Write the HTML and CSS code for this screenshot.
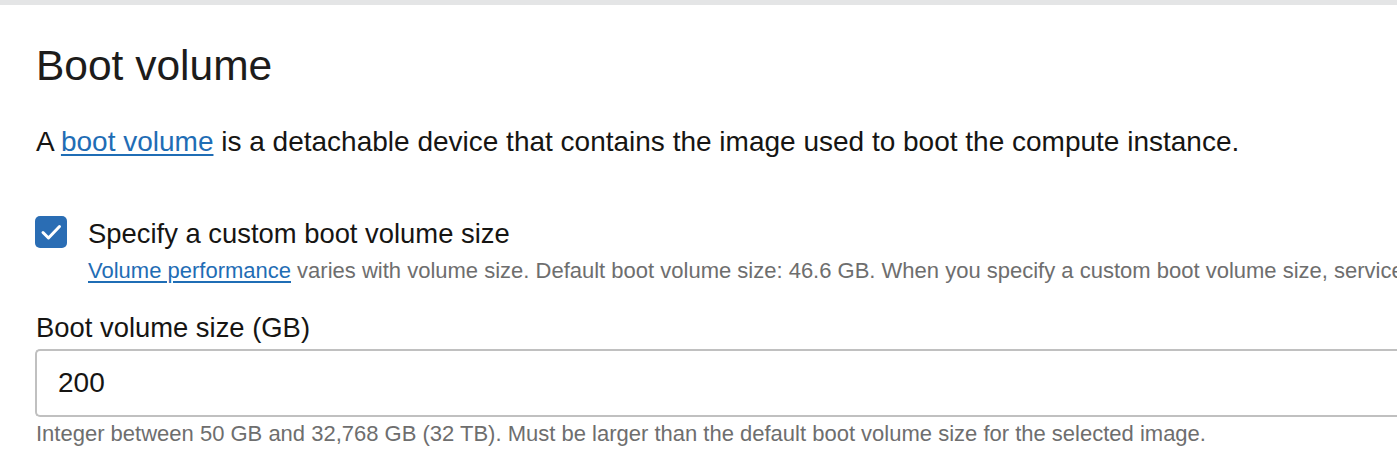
FILE: index.html
```html
<!DOCTYPE html>
<html lang="en">
<head>
<meta charset="utf-8">
<title>Boot volume</title>
<link rel="stylesheet" href="styles.css">
</head>
<body>
<div class="topbar"></div>
<main class="section">
  <h2 class="title">Boot volume</h2>
  <p class="intro">A <a href="#" class="link">boot volume</a> is a detachable device that contains the image used to boot the compute instance.</p>
  <div class="check-row">
    <span class="checkbox">
      <svg width="32" height="32" viewBox="0 0 32 32"><polyline points="8,16.5 13.5,22 24.5,10.5" fill="none" stroke="#fff" stroke-width="3" stroke-linecap="round" stroke-linejoin="round"/></svg>
    </span>
    <div class="check-text">
      <div class="check-label">Specify a custom boot volume size</div>
      <div class="help nowrap"><a href="#" class="link">Volume performance</a> varies with volume size. Default boot volume size: 46.6 GB. When you specify a custom boot volume size, service limits apply.</div>
    </div>
  </div>
  <div class="field">
    <label class="field-label" for="bvs">Boot volume size (GB)</label>
    <div class="input"><span class="value">200</span></div>
    <div class="help">Integer between 50 GB and 32,768 GB (32 TB). Must be larger than the default boot volume size for the selected image.</div>
  </div>
</main>
</body>
</html>
```
FILE: styles.css
```css
html, body {
  margin: 0;
  padding: 0;
  background: #ffffff;
  overflow: hidden;
}
body {
  font-family: "Liberation Sans", Arial, sans-serif;
  color: #161513;
  width: 1397px;
  height: 463px;
}
.topbar {
  height: 5px;
  background: #e4e5e6;
}
.section {
  padding-left: 36px;
  width: 1500px;
}
.title {
  margin: 36px 0 0 0;
  font-size: 42.5px;
  line-height: 50px;
  font-weight: normal;
  color: #1d1c1b;
}
.intro {
  margin: 33px 0 0 0;
  font-size: 28px;
  line-height: 36px;
}
.link {
  color: #1f6db5;
  text-decoration: underline;
  text-underline-offset: 3px;
}
.check-row {
  display: flex;
  gap: 21px;
  margin-top: 55px;
  margin-left: -1px;
}
.checkbox {
  flex: none;
  width: 32px;
  height: 32px;
  margin-top: 1px;
  border-radius: 5px;
  background: #2a6db4;
  display: block;
}
.checkbox svg { display: block; }
.check-label {
  font-size: 27.4px;
  line-height: 36px;
  margin-top: 1px;
}
.help {
  font-size: 22px;
  line-height: 28px;
  color: #6e6e6e;
}
.nowrap { white-space: nowrap; }
.check-text .help { margin-top: 5px; }
.field { margin-top: 25px; }
.field-label {
  display: block;
  font-size: 27.4px;
  line-height: 36px;
}
.input {
  margin-top: 3px;
  margin-left: -1px;
  height: 68px;
  box-sizing: border-box;
  border: 2px solid #c0c0c0;
  border-right: none;
  border-radius: 5px 0 0 5px;
  display: flex;
  align-items: center;
  padding-left: 21px;
  font-size: 28px;
}
.field .help { margin-top: 3px; }
```
